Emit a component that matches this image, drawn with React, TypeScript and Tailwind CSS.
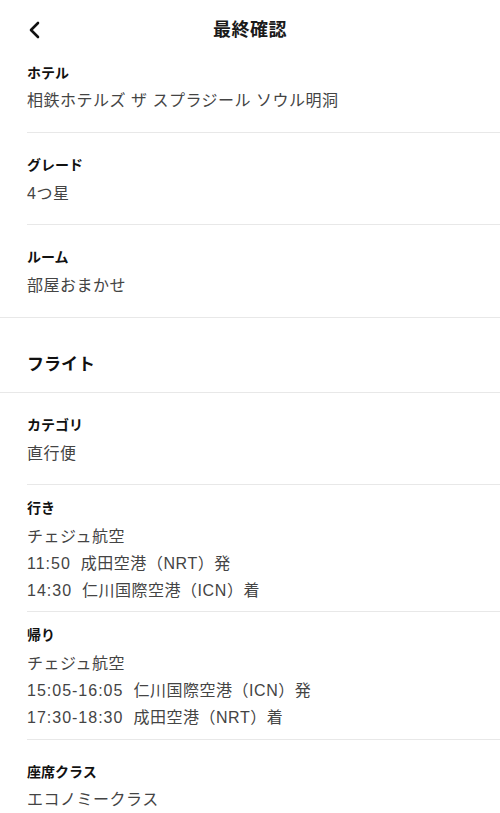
import { ReactNode } from "react";

const font = { fontFamily: '"Liberation Sans", "Noto Sans CJK JP", sans-serif' };

function Label({ children }: { children: ReactNode }) {
    return <p className="text-[14px] leading-[20px] font-semibold text-[#111111]">{children}</p>;
}

function Value({ children }: { children: ReactNode }) {
    return <p className="text-[16px] leading-[24px] text-[#444444] tracking-[0.5px]">{children}</p>;
}

function Line({ children }: { children: ReactNode }) {
    return <p className="text-[16px] leading-[27px] text-[#444444] tracking-[0.5px]">{children}</p>;
}

function Leg({ time, place, code, mark }: { time: string; place: string; code: string; mark: string }) {
    return (
        <Line>
            <span className="mr-[10px] tracking-[1px]">{time}</span>
            {place}（<span className="tracking-[0.6px]">{code}</span>）{mark}
        </Line>
    );
}

export default function App() {
    return (
        <div className="w-[500px] min-h-[813px] bg-white" style={font}>
            {/* Header */}
            <header className="h-[60px] flex items-center justify-center relative">
                <button className="absolute left-[27px] top-[21px] p-0">
                    <svg width="16" height="18" viewBox="0 0 16 18" fill="none">
                        <polyline points="11,2 4,9 11,16" stroke="#111111" strokeWidth="2.6" strokeLinecap="round" strokeLinejoin="round" />
                    </svg>
                </button>
                <h1 className="text-[18px] font-semibold text-[#1a1a1a] tracking-[0.5px]">最終確認</h1>
            </header>

            {/* Hotel */}
            <div className="pl-[27px]">
                <div className="pt-[3px] pb-[19px] border-b border-[#e8e8e8]">
                    <Label>ホテル</Label>
                    <div className="mt-[6px]"><Value>相鉄ホテルズ ザ スプラジール ソウル明洞</Value></div>
                </div>
                <div className="pt-[22px] pb-[18px] border-b border-[#e8e8e8]">
                    <Label>グレード</Label>
                    <div className="mt-[7px]"><Value>4つ星</Value></div>
                </div>
            </div>
            <div className="pl-[27px] pt-[22px] pb-[19px] border-b border-[#e8e8e8]">
                <Label>ルーム</Label>
                <div className="mt-[7px]"><Value>部屋おまかせ</Value></div>
            </div>

            {/* Flight */}
            <div className="pl-[27px] pt-[35px] pb-[15px] border-b border-[#e8e8e8]">
                <h2 className="text-[17px] leading-[24px] font-semibold text-[#111111]">フライト</h2>
            </div>
            <div className="pl-[27px]">
                <div className="pt-[22px] pb-[18px] border-b border-[#e8e8e8]">
                    <Label>カテゴリ</Label>
                    <div className="mt-[7px]"><Value>直行便</Value></div>
                </div>
                <div className="pt-[13px] pb-[7px] border-b border-[#e8e8e8]">
                    <Label>行き</Label>
                    <div className="mt-[5px]">
                        <Line>チェジュ航空</Line>
                        <Leg time="11:50" place="成田空港" code="NRT" mark="発" />
                        <Leg time="14:30" place="仁川国際空港" code="ICN" mark="着" />
                    </div>
                </div>
                <div className="pt-[13px] pb-[8px] border-b border-[#e8e8e8]">
                    <Label>帰り</Label>
                    <div className="mt-[5px]">
                        <Line>チェジュ航空</Line>
                        <Leg time="15:05-16:05" place="仁川国際空港" code="ICN" mark="発" />
                        <Leg time="17:30-18:30" place="成田空港" code="NRT" mark="着" />
                    </div>
                </div>
                <div className="pt-[22px] pb-[18px]">
                    <Label>座席クラス</Label>
                    <div className="mt-[6px]"><Value>エコノミークラス</Value></div>
                </div>
            </div>
        </div>
    );
}
